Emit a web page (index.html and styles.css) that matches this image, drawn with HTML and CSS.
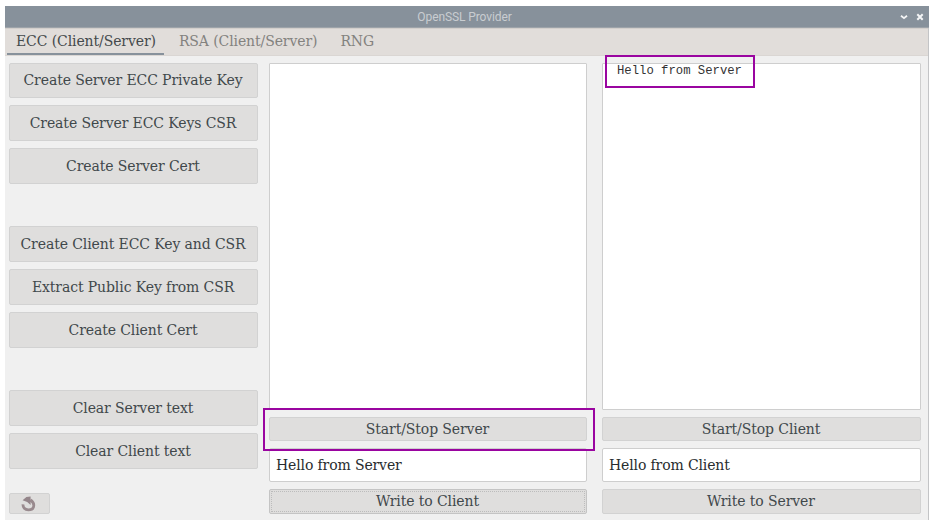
FILE: index.html
```html
<!DOCTYPE html>
<html lang="en">
<head>
<meta charset="utf-8">
<title>OpenSSL Provider</title>
<link rel="stylesheet" href="styles.css">
</head>
<body>
<main class="window">
  <header class="titlebar">
    <span class="title">OpenSSL Provider</span>
    <div class="controls">
      <svg width="8" height="8" viewBox="0 0 8 8"><path d="M1 2.7 4 5.2 7 2.7" fill="none" stroke="#f4f5f6" stroke-width="1.8"/></svg>
      <svg width="8" height="8" viewBox="0 0 8 8"><path d="M1.3 1.3 6.7 6.7M6.7 1.3 1.3 6.7" fill="none" stroke="#f4f5f6" stroke-width="2"/></svg>
    </div>
  </header>
  <nav class="tabs">
    <span class="tab active">ECC (Client/Server)</span>
    <span class="tab">RSA (Client/Server)</span>
    <span class="tab">RNG</span>
  </nav>
  <div class="content">
    <aside class="actions">
      <div class="group">
        <button class="btn first">Create Server ECC Private Key</button>
        <button class="btn">Create Server ECC Keys CSR</button>
        <button class="btn">Create Server Cert</button>
      </div>
      <div class="group">
        <button class="btn">Create Client ECC Key and CSR</button>
        <button class="btn">Extract Public Key from CSR</button>
        <button class="btn">Create Client Cert</button>
      </div>
      <div class="group">
        <button class="btn">Clear Server text</button>
        <button class="btn">Clear Client text</button>
      </div>
      <button class="btn undo" aria-label="Reset">
        <svg width="16" height="16" viewBox="0 0 16 16"><path d="M2 8.4C1.8 11.6 3.8 13.8 7.4 13.8C10.8 13.8 12.8 12 12.8 9.2C12.8 7 11.6 5.4 9.4 4" fill="none" stroke="#998a8e" stroke-width="2.8"/><path d="M1.6 4.2 5.4 1 9.6.4V9L6.2 6Z" fill="#94858a"/></svg>
      </button>
    </aside>
    <section class="panel">
      <div class="log"></div>
      <div class="marked"><button class="btn slim">Start/Stop Server</button></div>
      <div class="field">Hello from Server</div>
      <button class="btn slim write focused">Write to Client</button>
    </section>
    <section class="panel">
      <div class="log"><span class="line">Hello from Server</span></div>
      <div><button class="btn slim">Start/Stop Client</button></div>
      <div class="field">Hello from Client</div>
      <button class="btn slim write">Write to Server</button>
    </section>
  </div>
</main>
</body>
</html>
```
FILE: styles.css
```css
* { box-sizing: border-box; }
body { margin: 0; background: #fff; font-family: "DejaVu Serif", serif; font-size: 14px; letter-spacing: -0.1px; color: #41484b; }
.window { width: 924px; height: 514px; margin: 6px 0 0 5px; background: #f0f0f0; border-right: 1px solid #c3c4c6; }
.titlebar { width: 924px; height: 22px; background: #87919b; border-bottom: 1px solid #9da3a9; display: grid; grid-template-columns: 1fr auto 1fr; align-items: center; }
.title { grid-column: 2; font: 12px/20px Roboto, sans-serif; color: #c9cdd1; margin-right: 5px; }
.controls { justify-self: end; display: flex; gap: 8px; margin-right: 5px; }
.controls svg { display: block; }
.tabs { height: 28px; display: flex; gap: 6px; padding-left: 2px; background: #e1ddda; border-top: 1px solid #d3cfcc; border-bottom: 1px solid #dad6d3; }
.tab { height: 26px; padding: 0 8px 0 9px; line-height: 25px; color: #83827f; border-bottom: 2px solid transparent; white-space: nowrap; letter-spacing: -0.1px; }
.tab.active { color: #454a4c; border-color: #87919b; }
.content { display: grid; grid-template-columns: 249px 318px 319px; column-gap: 11px; padding: 7px 0 0 4px; }
.panel + .panel { margin: 0 -4px 0 4px; }
.actions { display: flex; flex-direction: column; }
.group { display: flex; flex-direction: column; gap: 7px; margin-bottom: 42px; }
.group:nth-child(3) { margin-bottom: 24px; }
.btn { display: flex; align-items: center; justify-content: center; width: 100%; height: 36px; padding: 0 1px 1px 0; font: inherit; letter-spacing: inherit; color: inherit; background: #dfdedd; border: 1px solid #d2d2d2; border-radius: 2px; white-space: nowrap; }
.btn.first { height: 35px; padding-bottom: 2px; }
.btn.undo { width: 41px; height: 21px; padding-bottom: 0; }
.panel { display: flex; flex-direction: column; }
.log { height: 347px; margin-bottom: 7px; background: #fff; border: 1px solid #cecece; border-radius: 1px; }
.line { display: block; position: relative; width: 150px; height: 33px; left: 2px; top: -9px; border: 2px solid #9a05a0; padding-left: 10px; font: 12.25px/29px "Liberation Mono", monospace; letter-spacing: 0; color: #333; }
.btn.slim { height: 24px; padding: 0 1px 0 0; }
.btn.write { height: 25px; padding-bottom: 1px; }
.marked { position: relative; }
.marked::after { content: ""; position: absolute; inset: -9px -8px -10px -6px; border: 2px solid #9a05a0; }
.field { height: 34px; margin: 7px 0; padding-left: 6px; line-height: 32px; background: #fff; border: 1px solid #cecece; border-radius: 2px; color: #282c2e; letter-spacing: -0.13px; }
.btn.focused { border-color: #c4c4c4; outline: 1px dotted #bcbcbc; outline-offset: -3px; }
```
